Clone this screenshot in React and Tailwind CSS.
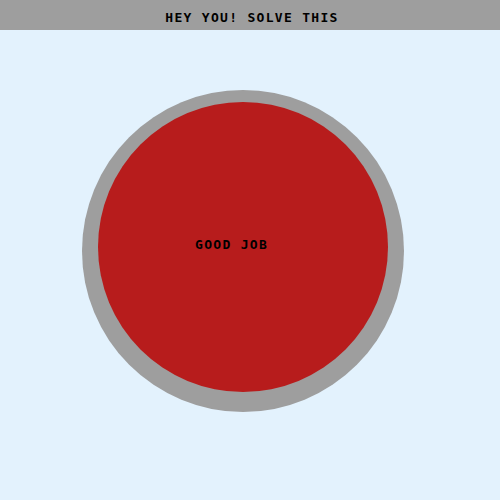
import React from 'react';

const font = { fontFamily: '"DejaVu Sans Mono", "Liberation Mono", monospace' };

export default function App() {
  return (
    <div className="w-[500px] h-[500px] bg-[#e3f2fd] overflow-hidden" style={font}>
      <div className="h-[30px] bg-[#9e9e9e] flex items-center justify-center pl-[4px] pt-[4px]">
        <span className="text-[13px] font-bold tracking-[1.3px] text-black leading-none">HEY YOU! SOLVE THIS</span>
      </div>
      <div className="ml-[82px] mt-[60px] w-[322px] h-[322px] rounded-full bg-[#9e9e9e] pt-[12px] pl-[16px]">
        <div className="w-[290px] h-[290px] rounded-full bg-[#b71c1c] pt-[130px] pl-[97px]">
          <span className="text-[13px] font-bold tracking-[1.3px] text-black leading-none">GOOD JOB</span>
        </div>
      </div>
    </div>
  );
}
